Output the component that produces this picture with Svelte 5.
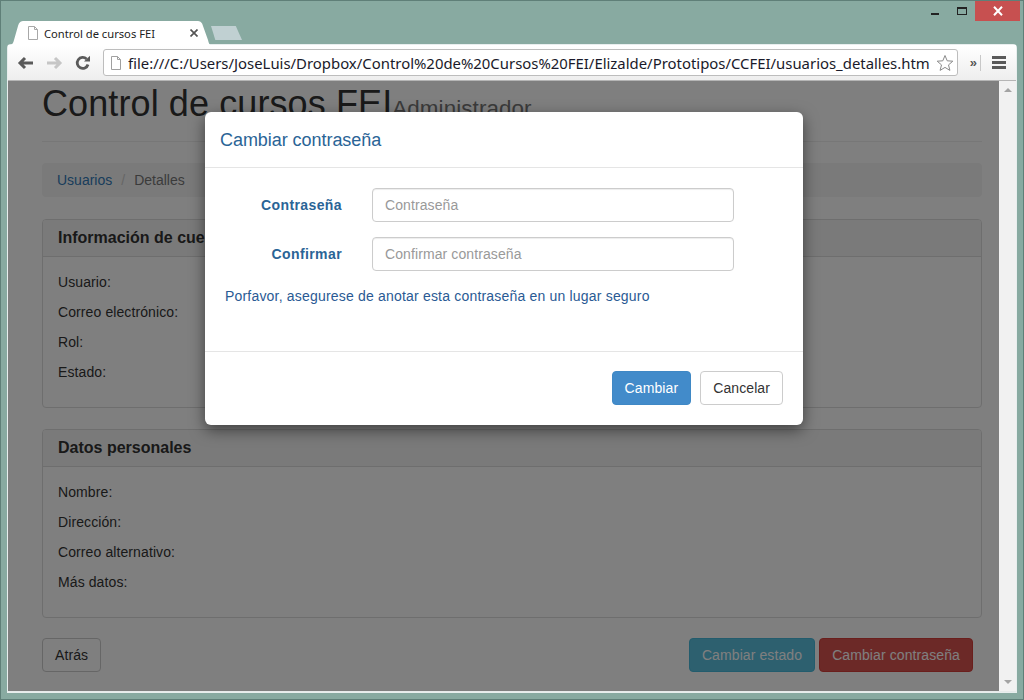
<script>
  let info = ["Usuario:", "Correo electrónico:", "Rol:", "Estado:"];
  let personal = ["Nombre:", "Dirección:", "Correo alternativo:", "Más datos:"];
</script>

<div class="window">
  <div class="controls">
    <span class="min"></span>
    <span class="max"></span>
    <span class="close">
      <svg width="12" height="10" viewBox="0 0 12 10"><path d="M2 0.8 L10 9.2 M10 0.8 L2 9.2" stroke="#fff" stroke-width="2" /></svg>
    </span>
  </div>

  <div class="tabs">
    <div class="tab">
      <svg class="doc" width="12" height="14" viewBox="0 0 12 14"><path d="M1.5 .5 H7.5 L10.5 3.5 V13.5 H1.5 Z M7.5 .5 V3.5 H10.5" fill="#fff" stroke="#a8a8a8" /></svg>
      <span class="tab-title">Control de cursos FEI</span>
      <svg class="tab-x" width="8" height="8" viewBox="0 0 8 8"><path d="M.5 .5 L7.5 7.5 M7.5 .5 L.5 7.5" stroke="#555" stroke-width="1.7" /></svg>
    </div>
    <div class="newtab"></div>
  </div>

  <div class="browser">
    <div class="toolbar">
      <svg class="back" width="18" height="14" viewBox="0 0 18 14"><path d="M16 7 H4 M8 2 L3 7 L8 12" fill="none" stroke="#5a5a5a" stroke-width="3" /></svg>
      <svg width="18" height="14" viewBox="0 0 18 14"><path d="M2 7 H14 M10 2 L15 7 L10 12" fill="none" stroke="#c6c6c6" stroke-width="3" /></svg>
      <svg class="reload" width="16" height="16" viewBox="0 0 16 16"><path d="M13 9.5 A5.5 5.5 0 1 1 11.6 4" fill="none" stroke="#5a5a5a" stroke-width="2.8" /><path d="M9 6.5 L15 6.5 L15 .8 Z" fill="#5a5a5a" /></svg>
      <div class="omnibox">
        <svg width="12" height="14" viewBox="0 0 12 14"><path d="M1.5 .5 H7.5 L10.5 3.5 V13.5 H1.5 Z M7.5 .5 V3.5 H10.5" fill="#fff" stroke="#a0a0a0" /></svg>
        <span class="url">file:///C:/Users/JoseLuis/Dropbox/Control%20de%20Cursos%20FEI/Elizalde/Prototipos/CCFEI/usuarios_detalles.htm</span>
        <svg class="star" width="18" height="18" viewBox="0 0 18 18"><path d="M9 1.5 L11.2 6.8 L16.8 7.2 L12.5 10.9 L13.9 16.4 L9 13.4 L4.1 16.4 L5.5 10.9 L1.2 7.2 L6.8 6.8 Z" fill="#fff" stroke="#8a8a8a" /></svg>
      </div>
      <span class="more">»</span>
      <span class="divider"></span>
      <span class="menu"><i></i><i></i><i></i></span>
    </div>

    <div class="viewport">
      <div class="page">
        <div class="content">
          <div class="page-header">
            <h1>Control de cursos FEI<small>Administrador</small></h1>
          </div>
          <div class="breadcrumb">
            <a href="#top">Usuarios</a><span class="sep">/</span><span class="active">Detalles</span>
          </div>
          <div class="panel">
            <div class="panel-heading">Información de cuenta</div>
            <div class="panel-body">
              {#each info as row}<p>{row}</p>{/each}
            </div>
          </div>
          <div class="panel">
            <div class="panel-heading">Datos personales</div>
            <div class="panel-body">
              {#each personal as row}<p>{row}</p>{/each}
            </div>
          </div>
          <div class="actions">
            <button class="btn">Atrás</button>
            <div class="right">
              <button class="btn info">Cambiar estado</button>
              <button class="btn danger">Cambiar contraseña</button>
            </div>
          </div>
        </div>

        <div class="backdrop"></div>
        <div class="modal">
          <div class="modal-header">Cambiar contraseña</div>
          <div class="modal-body">
            <div class="field">
              <label for="pass">Contraseña</label>
              <input id="pass" placeholder="Contraseña" />
            </div>
            <div class="field">
              <label for="confirm">Confirmar</label>
              <input id="confirm" placeholder="Confirmar contraseña" />
            </div>
            <p class="note">Porfavor, asegurese de anotar esta contraseña en un lugar seguro</p>
          </div>
          <div class="modal-footer">
            <button class="btn primary">Cambiar</button>
            <button class="btn">Cancelar</button>
          </div>
        </div>
      </div>

      <div class="scrollbar">
        <span class="up"></span>
        <span class="down"></span>
      </div>
    </div>
  </div>
</div>

<style>
  :global(body) {
    margin: 0;
    overflow: hidden;
  }

  .window {
    position: relative;
    width: 1024px;
    height: 700px;
    box-sizing: border-box;
    padding: 20px 7px 7px;
    background: #88aaa1;
    border: 1px solid #5f7f78;
    display: flex;
    flex-direction: column;
    font-family: "Liberation Sans", Arial, sans-serif;
    font-size: 14px;
    letter-spacing: 0.1px;
    color: #333;
  }

  .controls {
    position: absolute;
    top: 0;
    right: 0;
    width: 200px;
    display: flex;
    justify-content: flex-end;
    align-items: flex-start;
  }

  .min {
    width: 8px;
    height: 2px;
    background: #222;
    margin: 12px 18px 0 0;
  }

  .max {
    width: 8px;
    height: 5px;
    border: 1px solid #222;
    border-top-width: 2px;
    margin: 6px 8px 0 0;
  }

  .close {
    width: 45px;
    height: 20px;
    background: #c75050;
    display: flex;
    align-items: center;
    justify-content: center;
    margin-right: 3px;
  }

  .tabs {
    height: 24px;
    flex: none;
    display: flex;
    align-items: flex-end;
    margin-left: -1px;
  }

  .tab {
    width: 206px;
    height: 25px;
    margin-bottom: -1px;
    flex: none;
    box-sizing: border-box;
    background: #fff;
    display: flex;
    align-items: center;
    padding: 0 15px 1px 20px;
    gap: 5px;
    position: relative;
    z-index: 1;
    font-family: "Noto Sans", sans-serif;
    font-size: 11.2px;
    letter-spacing: 0;
    color: #222;
    clip-path: path("M0 25 C4 25 6 23 7 19 L11 5 C12 1 14 0 17 0 H190 C193 0 195 1 196 5 L201 19 C202 23 203 25 206 25 Z");
  }

  .tab-title {
    flex: 1;
    white-space: nowrap;
  }

  .newtab {
    width: 31px;
    height: 14px;
    margin: 0 0 5px -2px;
    flex: none;
    background: #c0d0d2;
    clip-path: polygon(0 0, 80% 0, 100% 100%, 14% 100%);
  }

  .browser {
    flex: 1;
    min-height: 0;
    display: flex;
    flex-direction: column;
    background: #fff;
    border-radius: 3px 3px 0 0;
    box-shadow: 0 0 0 1px #e8eeee;
  }

  .toolbar {
    height: 36px;
    flex: none;
    box-sizing: border-box;
    background: linear-gradient(#ffffff, #eeeeee);
    border-bottom: 1px solid #b5b5b5;
    display: flex;
    align-items: center;
    padding: 0 7px 0 9px;
    gap: 11px;
  }

  .back {
    margin-right: -1px;
  }

  .reload {
    margin-left: 1px;
  }

  .omnibox {
    flex: 1;
    height: 27px;
    min-width: 0;
    box-sizing: border-box;
    margin-left: 1px;
    background: #fff;
    border: 1px solid #bdbdbd;
    border-radius: 3px;
    display: flex;
    align-items: center;
    padding: 0 3px 0 6px;
    gap: 6px;
  }

  .url {
    flex: 1;
    min-width: 0;
    overflow: hidden;
    white-space: nowrap;
    font-family: "Noto Sans", sans-serif;
    font-size: 14.9px;
    letter-spacing: 0;
    color: #1a1a2a;
  }

  .star {
    flex: none;
  }

  .more {
    font-size: 13px;
    font-weight: bold;
    color: #555;
    margin-left: 1px;
  }

  .divider {
    width: 1px;
    height: 16px;
    background: #c8c8c8;
    margin-left: -8px;
  }

  .menu {
    width: 14px;
    display: flex;
    flex-direction: column;
    gap: 2px;
    margin: 0 3px 0 0;
  }

  .menu i {
    display: block;
    height: 3px;
    background: #5a5a5a;
  }

  .viewport {
    flex: 1;
    min-height: 0;
    display: flex;
    border-bottom: 1px solid #e6eaea;
  }

  .page {
    position: relative;
    flex: 1;
    overflow: hidden;
    background: #fff;
  }

  .content {
    box-sizing: border-box;
    width: 940px;
    margin-left: 34px;
    display: flex;
    flex-direction: column;
  }

  .page-header {
    border-bottom: 1px solid #eee;
    height: 61px;
    box-sizing: border-box;
    padding-top: 2px;
    margin-bottom: 21px;
  }

  h1 {
    margin: 0;
    font-size: 36px;
    font-weight: 500;
    line-height: 42px;
    color: #333;
  }

  h1 small {
    font-size: 22.4px;
    font-weight: 400;
    color: #777;
  }

  .breadcrumb {
    height: 34px;
    box-sizing: border-box;
    padding: 7px 15px;
    line-height: 20px;
    letter-spacing: 0;
    background: #f5f5f5;
    border-radius: 4px;
    margin-bottom: 22px;
  }

  .breadcrumb a {
    color: #337ab7;
    text-decoration: none;
  }

  .sep {
    color: #ccc;
    padding: 0 9px;
  }

  .active {
    color: #777;
  }

  .panel {
    height: 189px;
    box-sizing: border-box;
    border: 1px solid #ddd;
    border-radius: 4px;
    margin-bottom: 21px;
    background: #fff;
  }

  .panel-heading {
    height: 37px;
    box-sizing: border-box;
    padding: 9px 15px;
    background: #f5f5f5;
    border-bottom: 1px solid #ddd;
    border-radius: 3px 3px 0 0;
    font-size: 16px;
    font-weight: bold;
    line-height: 18px;
    letter-spacing: 0;
  }

  .panel-body {
    padding: 15px;
  }

  .panel-body p {
    margin: 0 0 10px;
    line-height: 20px;
  }

  .actions {
    display: flex;
    justify-content: space-between;
    margin-top: -1px;
    padding-right: 9px;
  }

  .btn {
    height: 34px;
    box-sizing: border-box;
    padding: 6px 12px;
    font-family: inherit;
    font-size: 14px;
    letter-spacing: 0.1px;
    line-height: 20px;
    color: #333;
    background: #fff;
    border: 1px solid #ccc;
    border-radius: 4px;
  }

  .info {
    color: #fff;
    background: #5bc0de;
    border-color: #46b8da;
  }

  .danger {
    color: #fff;
    background: #d9534f;
    border-color: #d43f3a;
  }

  .primary {
    color: #fff;
    background: #428bca;
    border-color: #3f88c5;
  }

  .backdrop {
    position: absolute;
    inset: 0;
    background: rgba(0, 0, 0, 0.5);
  }

  .modal {
    position: absolute;
    left: 197px;
    top: 31px;
    width: 598px;
    height: 313px;
    box-sizing: border-box;
    background: #fff;
    border-radius: 6px;
    box-shadow: 0 5px 15px rgba(0, 0, 0, 0.5);
    display: flex;
    flex-direction: column;
  }

  .modal-header {
    height: 56px;
    box-sizing: border-box;
    padding: 15px;
    border-bottom: 1px solid #e5e5e5;
    font-size: 18px;
    letter-spacing: -0.05px;
    line-height: 26px;
    color: #2a6496;
  }

  .modal-body {
    flex: 1;
    padding: 20px 20px 0;
  }

  .field {
    display: flex;
    align-items: center;
    margin-bottom: 15px;
  }

  .field label {
    width: 117px;
    text-align: right;
    font-weight: bold;
    letter-spacing: 0.4px;
    color: #2a6496;
  }

  .field input {
    width: 362px;
    height: 34px;
    box-sizing: border-box;
    margin-left: 30px;
    padding: 6px 12px;
    font-family: inherit;
    font-size: 14px;
    letter-spacing: 0.1px;
    border: 1px solid #ccc;
    border-radius: 4px;
    box-shadow: inset 0 1px 1px rgba(0, 0, 0, 0.075);
  }

  .field input::placeholder {
    color: #999;
  }

  .note {
    margin: 0;
    line-height: 20px;
    letter-spacing: 0.19px;
    color: #2a5a94;
  }

  .modal-footer {
    height: 74px;
    box-sizing: border-box;
    padding: 19px 20px 0 0;
    border-top: 1px solid #e5e5e5;
    display: flex;
    justify-content: flex-end;
    gap: 9px;
  }

  .scrollbar {
    width: 17px;
    flex: none;
    background: #f1f1f1;
    display: flex;
    flex-direction: column;
    justify-content: space-between;
    align-items: center;
    padding: 7px 0;
    box-sizing: border-box;
  }

  .up {
    border: 4px solid transparent;
    border-top: 0;
    border-bottom: 4px solid #a3a3a3;
  }

  .down {
    border: 4px solid transparent;
    border-bottom: 0;
    border-top: 4px solid #a3a3a3;
  }
</style>
